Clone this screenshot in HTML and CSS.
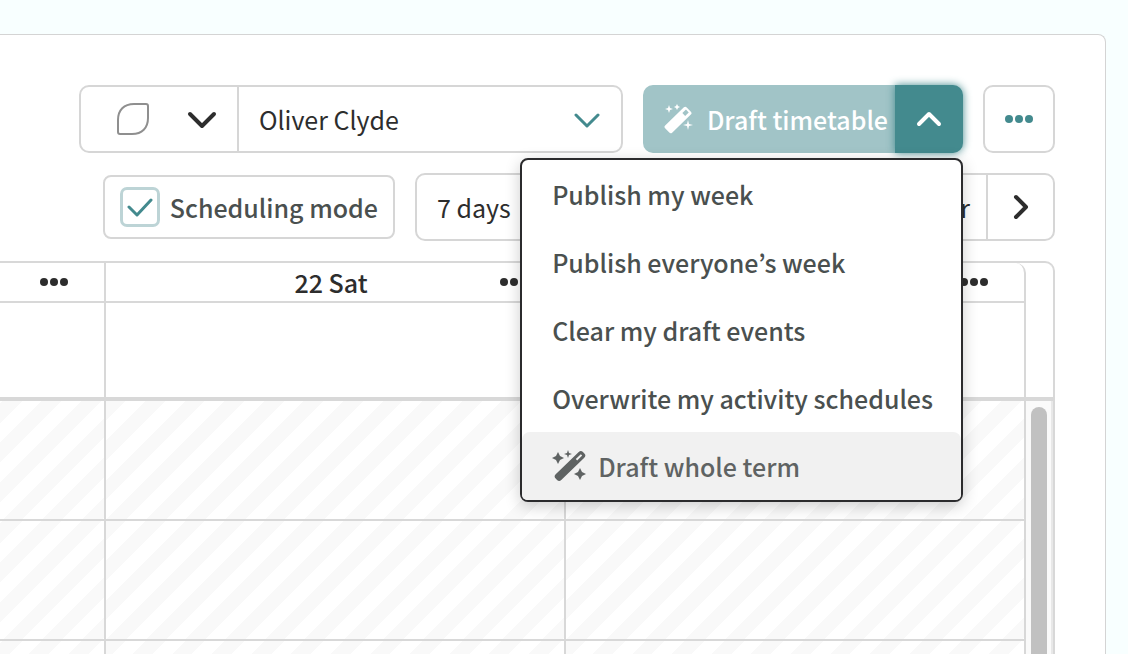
FILE: index.html
```html
<!DOCTYPE html>
<html lang="en">
<head>
    <meta charset="UTF-8">
    <meta name="viewport" content="width=device-width, initial-scale=1.0">
    <title>Timetable</title>
    <link rel="stylesheet" href="styles.css">
</head>
<body>
    <main class="card">
        <div class="toolbar">
            <div class="group picker">
                <button class="shape-button" aria-label="Choose view">
                    <svg width="34" height="34" viewBox="0 0 34 34" fill="none" stroke="#8f8f8f" stroke-width="2">
                        <path d="M2 30V18C2 8 8 2 18 2H30Q32 2 32 4V16C32 26 26 32 16 32H4Q2 32 2 30Z"/>
                    </svg>
                    <svg width="30" height="20" viewBox="0 0 30 20" fill="none" stroke="#2d2d2d" stroke-width="4" stroke-linecap="round" stroke-linejoin="round">
                        <path d="M3 5L15 17L27 5"/>
                    </svg>
                </button>
                <select class="select person" aria-label="Person">
                    <option>Oliver Clyde</option>
                </select>
            </div>
            <div class="split">
                <button class="draft" disabled>
                    <svg width="30" height="30" viewBox="0 0 30 30" fill="currentColor">
                        <path fill-rule="evenodd" transform="translate(15 16) rotate(-44)" d="M-13 -5H13Q15 -5 15 -3V3Q15 5 13 5H-13Q-15 5 -15 3V-3Q-15 -5 -13 -5ZM8 -2V2H13V-2Z"/>
                        <path d="M6 1L7 4L10 5L7 6L6 9L5 6L2 5L5 4ZM14 0L15 2L17 3L15 4L14 6L13 4L11 3L13 2ZM25 16L26 20L30 21L26 22L25 26L24 22L20 21L24 20Z"/>
                    </svg>
                    Draft timetable
                </button>
                <button class="toggle" aria-label="More draft actions" aria-expanded="true">
                    <svg width="26" height="18" viewBox="0 0 26 18" fill="none" stroke="currentColor" stroke-width="4" stroke-linecap="round" stroke-linejoin="round">
                        <path d="M3 14L13 4L23 14"/>
                    </svg>
                </button>
                <div class="menu" role="menu">
                    <button class="menu-item" role="menuitem">Publish my week</button>
                    <button class="menu-item" role="menuitem">Publish everyone’s week</button>
                    <button class="menu-item" role="menuitem">Clear my draft events</button>
                    <button class="menu-item" role="menuitem">Overwrite my activity schedules</button>
                    <button class="menu-item" role="menuitem" disabled>
                        <svg width="34" height="34" viewBox="0 0 34 34" fill="currentColor">
                            <path fill-rule="evenodd" transform="translate(18 17) rotate(-44)" d="M-16 -4H16Q19 -4 19 -1V1Q19 4 16 4H-16Q-19 4 -19 1V-1Q-19 -4 -16 -4ZM9 -1V1H16V-1Z"/>
                            <path d="M6 3L8 7L12 9L8 11L6 15L4 11L0 9L4 7ZM16 1L17 4L20 5L17 6L16 9L15 6L12 5L15 4ZM28 19L30 23L34 25L30 27L28 31L26 27L22 25L26 23Z"/>
                        </svg>
                        Draft whole term
                    </button>
                </div>
            </div>
            <button class="more" aria-label="More">
                <svg width="28" height="8" viewBox="0 0 28 8" fill="currentColor">
                    <circle cx="4" cy="4" r="4"/><circle cx="14" cy="4" r="4"/><circle cx="24" cy="4" r="4"/>
                </svg>
            </button>
        </div>

        <div class="toolbar">
            <label class="mode">
                <input type="checkbox" class="check" checked>
                Scheduling mode
            </label>
            <div class="group range">
                <select class="select days" aria-label="Days shown">
                    <option>7 days</option>
                </select>
                <button class="period">r</button>
                <button class="next" aria-label="Next">
                    <svg width="18" height="26" viewBox="0 0 18 26" fill="none" stroke="currentColor" stroke-width="4" stroke-linecap="round" stroke-linejoin="round">
                        <path d="M4 3L14 13L4 23"/>
                    </svg>
                </button>
            </div>
        </div>

        <div class="calendar">
            <div class="days-area">
                <div class="row head">
                    <div class="day">
                        <span class="day-name"></span>
                        <button class="day-more" aria-label="Day menu">
                            <svg width="28" height="8" viewBox="0 0 28 8" fill="currentColor">
                                <circle cx="4" cy="4" r="4"/><circle cx="14" cy="4" r="4"/><circle cx="24" cy="4" r="4"/>
                            </svg>
                        </button>
                    </div>
                    <div class="day">
                        <span class="day-name">22 Sat</span>
                        <button class="day-more" aria-label="Day menu">
                            <svg width="28" height="8" viewBox="0 0 28 8" fill="currentColor">
                                <circle cx="4" cy="4" r="4"/><circle cx="14" cy="4" r="4"/><circle cx="24" cy="4" r="4"/>
                            </svg>
                        </button>
                    </div>
                    <div class="day">
                        <span class="day-name"></span>
                        <button class="day-more" aria-label="Day menu">
                            <svg width="28" height="8" viewBox="0 0 28 8" fill="currentColor">
                                <circle cx="4" cy="4" r="4"/><circle cx="14" cy="4" r="4"/><circle cx="24" cy="4" r="4"/>
                            </svg>
                        </button>
                    </div>
                </div>
                <div class="row all-day">
                    <div class="cell"></div>
                    <div class="cell"></div>
                    <div class="cell"></div>
                </div>
                <div class="row hours">
                    <div class="cell"></div>
                    <div class="cell"></div>
                    <div class="cell"></div>
                </div>
                <div class="row hours">
                    <div class="cell"></div>
                    <div class="cell"></div>
                    <div class="cell"></div>
                </div>
                <div class="row hours">
                    <div class="cell"></div>
                    <div class="cell"></div>
                    <div class="cell"></div>
                </div>
            </div>
            <div class="gutter">
                <div class="gutter-top"></div>
                <div class="track">
                    <div class="thumb"></div>
                </div>
            </div>
        </div>
    </main>
</body>
</html>
```
FILE: styles.css
```css
* {
    box-sizing: border-box;
}
body {
    margin: 0;
    height: 100vh;
    overflow: hidden;
    padding: 34px 22px 0 0;
    background-color: #f8ffff;
    color: #2d2d2d;
    font-family: "Source Sans Pro", "Noto Sans CJK JP", sans-serif;
    font-size: 25px;
    line-height: 36px;
}
button, select {
    margin: 0;
    padding: 0;
    border: none;
    background: none;
    color: inherit;
    font: inherit;
}
svg {
    flex: none;
}
.card {
    height: 100%;
    padding: 50px 50px 0 0;
    border: 1px solid #d4d4d4;
    border-width: 1px 1px 0 0;
    border-top-right-radius: 8px;
    background-color: #fff;
    display: flex;
    flex-direction: column;
    gap: 20px;
}
.toolbar {
    display: flex;
    align-items: center;
    justify-content: flex-end;
    gap: 20px;
}
.group {
    display: flex;
    height: 68px;
    border: 2px solid #d6d6d6;
    border-radius: 10px;
}
.picker {
    width: 544px;
}
.shape-button {
    display: flex;
    align-items: center;
    justify-content: space-between;
    width: 158px;
    padding: 0 20px 0 35px;
    border-right: 2px solid #d6d6d6;
}
.select {
    appearance: none;
    padding: 0 20px;
}
.person {
    flex: 1;
    background: url("data:image/svg+xml,%3Csvg xmlns='http://www.w3.org/2000/svg' width='26' height='18' fill='none' stroke='%23438a8e' stroke-width='3' stroke-linecap='round' stroke-linejoin='round'%3E%3Cpath d='M2 5L13 16L24 5'/%3E%3C/svg%3E") no-repeat right 21px center;
}
.split {
    position: relative;
    display: flex;
    height: 68px;
    color: #fff;
}
.draft {
    display: flex;
    align-items: center;
    gap: 14px;
    padding: 0 7px 0 20px;
    border-radius: 10px 0 0 10px;
    background-color: #a1c4c7;
    font-weight: 500;
}
.toggle {
    display: flex;
    align-items: center;
    justify-content: center;
    width: 68px;
    border-radius: 0 10px 10px 0;
    background-color: #438a8e;
    box-shadow: 0 0 8px #438a8e;
}
.menu {
    position: absolute;
    top: 73px;
    right: 0;
    z-index: 10;
    display: flex;
    flex-direction: column;
    border: 2px solid #2b2b2d;
    border-radius: 8px;
    background-color: #fff;
    box-shadow: 0 4px 16px rgba(0, 0, 0, 0.2);
    color: #4a504f;
}
.menu-item {
    display: flex;
    align-items: center;
    gap: 12px;
    height: 68px;
    padding: 0 28px 0 30px;
    font-weight: 500;
    white-space: nowrap;
}
.menu-item:disabled {
    border-radius: 8px 8px 5px 5px;
    background-color: #f1f1f1;
    color: #5f6363;
}
.more {
    display: flex;
    align-items: center;
    justify-content: center;
    width: 72px;
    height: 68px;
    border: 2px solid #d6d6d6;
    border-radius: 10px;
    color: #438a8e;
}
.mode {
    display: flex;
    align-items: center;
    gap: 10px;
    height: 64px;
    padding: 0 15px;
    border: 2px solid #d6d6d6;
    border-radius: 8px;
    color: #4a504f;
    font-weight: 500;
}
.check {
    appearance: none;
    width: 40px;
    height: 40px;
    margin: 0;
    border: 3px solid #bdd4d6;
    border-radius: 7px;
    background: url("data:image/svg+xml,%3Csvg xmlns='http://www.w3.org/2000/svg' width='26' height='20' fill='none' stroke='%23438a8e' stroke-width='3' stroke-linecap='round' stroke-linejoin='round'%3E%3Cpath d='M2 10L10 18L24 3'/%3E%3C/svg%3E") no-repeat center;
}
.range {
    width: 640px;
}
.days {
    flex: 1;
}
.period {
    padding: 0 16px;
    border-right: 2px solid #d6d6d6;
}
.next {
    display: flex;
    align-items: center;
    justify-content: center;
    width: 65px;
}
.calendar {
    display: flex;
    flex: 1;
    min-height: 0;
    overflow: hidden;
    border: 2px solid #d8d8d8;
    border-width: 2px 2px 0 0;
    border-top-right-radius: 10px;
}
.days-area {
    flex: 1;
    min-width: 0;
}
.row {
    display: flex;
    justify-content: flex-end;
}
.day, .cell {
    flex: none;
    width: 460px;
    border-right: 2px solid #d8d8d8;
}
.day {
    display: flex;
    align-items: center;
    height: 40px;
    padding-left: 92px;
    border-bottom: 2px solid #d8d8d8;
}
.day:last-child {
    border-top-right-radius: 10px;
}
.day-name {
    flex: 1;
    font-weight: 500;
    text-align: center;
}
.day-more {
    display: flex;
    justify-content: center;
    width: 100px;
}
.all-day {
    height: 98px;
    border-bottom: 4px solid #d8d8d8;
}
.hours {
    height: 120px;
    border-bottom: 2px solid #d8d8d8;
}
.hours .cell {
    background: repeating-linear-gradient(135deg, #f9f9f9 0 14px, #fff 14px 28px);
}
.gutter {
    display: flex;
    flex-direction: column;
    width: 27px;
}
.gutter-top {
    height: 138px;
    border-bottom: 4px solid #d8d8d8;
}
.track {
    flex: 1;
    padding: 6px 4px 0 5px;
    border-right: 2px solid #e8e8e8;
    background-color: #fafafa;
}
.thumb {
    height: 100%;
    border-radius: 8px 8px 0 0;
    background-color: #c1c1c1;
}
```
